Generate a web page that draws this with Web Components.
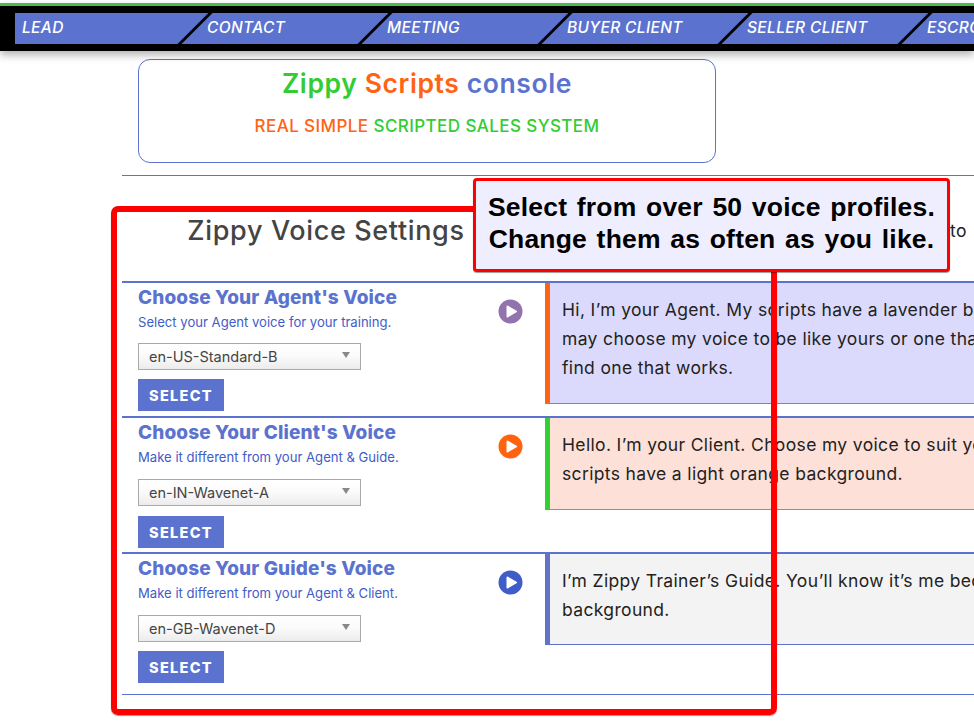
<!DOCTYPE html>
<html>
<head>
<meta charset="utf-8">
<title>Zippy Voice Settings</title>
<style>
    html, body {
        margin: 0;
        height: 725px;
        overflow: hidden;
        background: #fff;
        font-family: Inter, "Open Sans", sans-serif;
        position: relative;
    }
</style>
</head>
<body>
<zs-nav>
    <zs-tab>LEAD</zs-tab>
    <zs-tab>CONTACT</zs-tab>
    <zs-tab>MEETING</zs-tab>
    <zs-tab>BUYER CLIENT</zs-tab>
    <zs-tab>SELLER CLIENT</zs-tab>
    <zs-tab>ESCROW</zs-tab>
</zs-nav>

<zs-title-card></zs-title-card>

<zs-settings>
    <zs-voice-row color="#9273ad" bg="#dcdafc" edge="#ff6314" voice="en-US-Standard-B" style="--sel:12px;--btn:9px;--end:5px;--pad:21px">
        <span slot="title">Choose Your Agent's Voice</span>
        <span slot="sub">Select your Agent voice for your training.</span>
        Hi, I’m your Agent. My scripts have a lavender background. You<br>
        may choose my voice to be like yours or one that is different. Just<br>
        find one that works.
    </zs-voice-row>
    <zs-voice-row color="#ff6310" bg="#fde1d8" edge="#33d12f" voice="en-IN-Wavenet-A" style="--sel:13px;--btn:10px;--end:4px;--pad:21px">
        <span slot="title">Choose Your Client's Voice</span>
        <span slot="sub">Make it different from your Agent &amp; Guide.</span>
        Hello. I’m your Client. Choose my voice to suit your needs. My<br>
        scripts have a light orange background.
    </zs-voice-row>
    <zs-voice-row color="#3f5cc8" bg="#f3f3f3" edge="#6173c9" voice="en-GB-Wavenet-D" style="--sel:13px;--btn:9px;--end:11px;--pad:20px">
        <span slot="title">Choose Your Guide's Voice</span>
        <span slot="sub">Make it different from your Agent &amp; Client.</span>
        I’m Zippy Trainer’s Guide. You’ll know it’s me because of my grey<br>
        background.
    </zs-voice-row>
</zs-settings>

<zs-frame></zs-frame>
<zs-callout>Select from over 50 voice profiles.<br>Change them as often as you like.</zs-callout>

<script>
class ZsNav extends HTMLElement {
    connectedCallback() {
        this.attachShadow({ mode: 'open' });
        this.shadowRoot.innerHTML = `
            <style>
                :host {
                    display: block;
                    margin-top: 3px;
                    border-top: 3px solid #4cbb4c;
                    background: #000;
                    padding: 7px 0 7px 15px;
                    box-shadow: 0 4px 8px rgba(0, 0, 0, 0.3);
                    position: relative;
                }
                .tabs {
                    display: flex;
                    height: 31px;
                    background: #5b73cf;
                    overflow: hidden;
                }
            </style>
            <div class="tabs"><slot></slot></div>
        `;
    }
}

class ZsTab extends HTMLElement {
    connectedCallback() {
        this.attachShadow({ mode: 'open' });
        this.shadowRoot.innerHTML = `
            <style>
                :host {
                    display: block;
                    flex: 0 0 180px;
                    box-sizing: border-box;
                    padding-left: 12px;
                    position: relative;
                    color: #fff;
                    font: italic 500 15.5px/30px Inter, sans-serif;
                    letter-spacing: 0.35px;
                    white-space: nowrap;
                }
                :host(:first-child) {
                    padding-left: 7px;
                }
                :host(:not(:first-child))::before {
                    content: '';
                    position: absolute;
                    top: 0;
                    bottom: 0;
                    left: -2px;
                    width: 4px;
                    background: #000;
                    transform: skewX(-45deg);
                }
            </style>
            <slot></slot>
        `;
    }
}

class ZsTitleCard extends HTMLElement {
    connectedCallback() {
        this.attachShadow({ mode: 'open' });
        this.shadowRoot.innerHTML = `
            <style>
                :host {
                    display: block;
                    box-sizing: border-box;
                    width: 578px;
                    height: 104px;
                    margin: 8px 0 12px 138px;
                    border: 1px solid #5b73cf;
                    border-radius: 12px;
                    text-align: center;
                    font-family: Inter, sans-serif;
                }
                h1 {
                    margin: 0;
                    padding-top: 5px;
                    font-size: 26.5px;
                    line-height: 36px;
                    font-weight: 600;
                    letter-spacing: 0.6px;
                }
                p {
                    margin: 13px 0 0;
                    font-size: 17px;
                    line-height: 24px;
                    font-weight: 500;
                    letter-spacing: 0.42px;
                }
                .green { color: #33cc33; }
                .orange { color: #ff6314; }
                .blue { color: #5b73cf; }
            </style>
            <h1><span class="green">Zippy</span> <span class="orange">Scripts</span> <span class="blue">console</span></h1>
            <p><span class="orange">REAL SIMPLE</span> <span class="green">SCRIPTED SALES SYSTEM</span></p>
        `;
    }
}

class ZsSettings extends HTMLElement {
    connectedCallback() {
        this.attachShadow({ mode: 'open' });
        this.shadowRoot.innerHTML = `
            <style>
                :host {
                    display: block;
                    margin-left: 122px;
                    width: 1100px;
                    border-top: 1px solid #5b73cf;
                    border-bottom: 1px solid #5b73cf;
                    font-family: Inter, sans-serif;
                }
                .head {
                    display: grid;
                    grid-template-columns: 408px 420px auto;
                    height: 105px;
                    box-sizing: border-box;
                    padding-top: 37px;
                }
                h2 {
                    margin: 0;
                    text-align: center;
                    font-size: 27px;
                    line-height: 36px;
                    font-weight: 500;
                    letter-spacing: 0.65px;
                    color: #444;
                }
                .to {
                    grid-column: 3;
                    font-size: 17.5px;
                    line-height: 36px;
                    letter-spacing: 0.4px;
                    color: #222;
                }
            </style>
            <div class="head">
                <h2>Zippy Voice Settings</h2>
                <span class="to">to</span>
            </div>
            <slot></slot>
        `;
    }
}

class ZsVoiceRow extends HTMLElement {
    connectedCallback() {
        const color = this.getAttribute('color');
        const bg = this.getAttribute('bg');
        const edge = this.getAttribute('edge');
        const voice = this.getAttribute('voice');
        this.attachShadow({ mode: 'open' });
        this.shadowRoot.innerHTML = `
            <style>
                :host {
                    display: grid;
                    grid-template-columns: 376px 47px 1fr;
                    align-items: start;
                    border-top: 2px solid #5b73cf;
                    font-family: Inter, sans-serif;
                }
                .left {
                    padding: 0 0 var(--end) 16px;
                }
                .title {
                    height: 28px;
                    font-size: 19px;
                    line-height: 30px;
                    font-weight: 800;
                    letter-spacing: 0.13px;
                    color: #5b73cf;
                    white-space: nowrap;
                }
                .sub {
                    height: 20px;
                    font-size: 13.1px;
                    line-height: 22px;
                    color: #3f5cc8;
                    white-space: nowrap;
                }
                .pick {
                    display: grid;
                    width: 223px;
                    margin-top: var(--sel);
                }
                select {
                    grid-area: 1 / 1;
                    appearance: none;
                    box-sizing: border-box;
                    width: 223px;
                    height: 27px;
                    margin: 0;
                    padding: 0 0 0 10px;
                    border: 1px solid #a9a9a9;
                    border-radius: 0;
                    background: linear-gradient(#fff, #fbfbfb 45%, #ececec);
                    font: 14.5px Inter, sans-serif;
                    color: #444;
                }
                .pick svg {
                    grid-area: 1 / 1;
                    justify-self: end;
                    align-self: center;
                    margin: 0 11px 3px 0;
                    pointer-events: none;
                }
                button {
                    display: block;
                    width: 86px;
                    height: 32px;
                    margin-top: var(--btn);
                    padding: 1px 0 0;
                    border: 0;
                    background: #5b73cf;
                    color: #fff;
                    font: 800 14.5px/31px Inter, sans-serif;
                    letter-spacing: 1.3px;
                }
                .play {
                    display: block;
                    margin-top: 16px;
                }
                .panel {
                    box-sizing: border-box;
                    padding: 12px 0 var(--pad) 12px;
                    background: ${bg};
                    border-left: 5px solid ${edge};
                    border-bottom: 1px solid ${edge};
                    font-size: 17.5px;
                    line-height: 29px;
                    letter-spacing: 0.35px;
                    color: #222;
                    white-space: nowrap;
                }
            </style>
            <div class="left">
                <div class="title"><slot name="title"></slot></div>
                <div class="sub"><slot name="sub"></slot></div>
                <div class="pick">
                    <select><option>${voice}</option></select>
                    <svg width="8" height="6" viewBox="0 0 8 6"><path d="M0 0h8L4 6z" fill="#888"/></svg>
                </div>
                <button>SELECT</button>
            </div>
            <svg class="play" width="25" height="25" viewBox="0 0 25 25">
                <circle cx="12.5" cy="12.5" r="12" fill="${color}"/>
                <path d="M9.5 7.5 L18 12.5 L9.5 17.5 Z" fill="#fff" stroke="#fff" stroke-width="2" stroke-linejoin="round"/>
            </svg>
            <div class="panel"><slot></slot></div>
        `;
    }
}

class ZsFrame extends HTMLElement {
    connectedCallback() {
        this.attachShadow({ mode: 'open' });
        this.shadowRoot.innerHTML = `
            <style>
                :host {
                    display: block;
                    position: absolute;
                    left: 111px;
                    top: 206px;
                    width: 666px;
                    height: 509px;
                    box-sizing: border-box;
                    border: 6px solid #ff0000;
                    border-radius: 7px;
                    box-shadow: 0 1px 1px rgba(0, 0, 0, 0.4);
                }
            </style>
        `;
    }
}

class ZsCallout extends HTMLElement {
    connectedCallback() {
        this.attachShadow({ mode: 'open' });
        this.shadowRoot.innerHTML = `
            <style>
                :host {
                    display: block;
                    position: absolute;
                    left: 473px;
                    top: 178px;
                    width: 477px;
                    height: 94px;
                    box-sizing: border-box;
                    border: 3px solid #ff0000;
                    border-radius: 4px;
                    background: #eeeeff;
                    box-shadow: 0 1px 1px rgba(0, 0, 0, 0.4);
                    padding-top: 10px;
                    text-align: center;
                    color: #000;
                    font: bold 26.5px/32px "Liberation Sans", Arial, sans-serif;
                    letter-spacing: 0.2px;
                    word-spacing: 2px;
                    white-space: nowrap;
                }
            </style>
            <slot></slot>
        `;
    }
}

customElements.define('zs-nav', ZsNav);
customElements.define('zs-tab', ZsTab);
customElements.define('zs-title-card', ZsTitleCard);
customElements.define('zs-settings', ZsSettings);
customElements.define('zs-voice-row', ZsVoiceRow);
customElements.define('zs-frame', ZsFrame);
customElements.define('zs-callout', ZsCallout);
</script>
</body>
</html>
